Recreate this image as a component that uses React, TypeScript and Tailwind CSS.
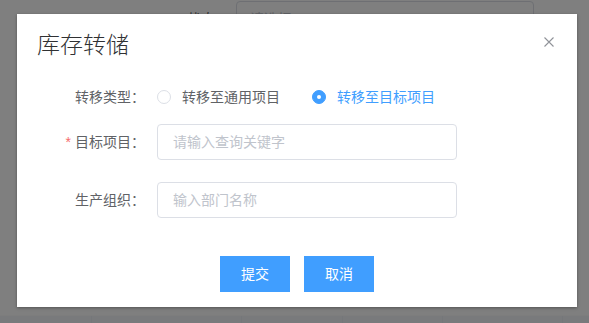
import { useState } from "react";

const font = "font-['Liberation_Sans','Noto_Sans_CJK_SC',sans-serif]";

const Radio = ({
	label,
	checked,
	onClick,
}: {
	label: string;
	checked: boolean;
	onClick: () => void;
}) => (
	<label onClick={onClick} className="flex items-center cursor-pointer">
		<span
			className={
				checked
					? "w-[14px] h-[14px] rounded-full bg-[#409eff] border border-[#409eff] flex items-center justify-center"
					: "w-[14px] h-[14px] rounded-full bg-white border border-[#dcdfe6]"
			}
		>
			{checked && <span className="w-[4px] h-[4px] rounded-full bg-white" />}
		</span>
		<span className={checked ? "pl-[11px] text-[#409eff]" : "pl-[11px] text-[#606266]"}>{label}</span>
	</label>
);

export default function App() {
	const [type, setType] = useState("target");

	return (
		<div className={`relative w-[589px] h-[323px] overflow-hidden bg-white ${font} text-[14px]`}>
			{/* page behind the dialog */}
			<div className="h-full flex flex-col justify-between">
				<div className="flex items-center pt-[1px] pl-[187px]">
					<span className="w-[49px] text-[#606266]">状态</span>
					<div className="w-[298px] h-[36px] border border-[#dcdfe6] rounded-[4px] px-[13px] flex items-center text-[#c0c4cc]">
						请选择
					</div>
				</div>
				<div className="border-t border-[#fafafa] bg-[#f3f5f8] h-[8px] flex">
					<div className="w-[92px] border-r border-[#ebeef5]" />
					<div className="w-[150px] border-r border-[#ebeef5]" />
					<div className="w-[101px] border-r border-[#ebeef5]" />
					<div className="w-[100px] border-r border-[#ebeef5]" />
					<div className="w-[120px] border-r border-[#ebeef5]" />
				</div>
			</div>

			<div className="absolute inset-0 bg-black/50" />

			<div className="absolute left-[17px] top-[14px] w-[560px] h-[293px] bg-white shadow-[0_1px_3px_rgba(0,0,0,0.35)]">
				<div className="h-[65px] pl-[20px] pt-[16px]">
					<h2 className="text-[23px] leading-[30px] font-light text-[#303133]">库存转储</h2>
				</div>
				<button className="absolute top-[23px] right-[23px] w-[10px] h-[10px]">
					<svg viewBox="0 0 10 10" width="10" height="10" className="block">
						<path d="M0.5 0.5 L9.5 9.5 M9.5 0.5 L0.5 9.5" stroke="#909399" strokeWidth="1.1" />
					</svg>
				</button>

				<div className="pl-[40px]">
					<div className="flex items-center h-[36px]">
						<span className="w-[100px] pr-[12px] text-right text-[#606266]">转移类型：</span>
						<div className="flex items-center gap-[32px]">
							<Radio label="转移至通用项目" checked={type === "common"} onClick={() => setType("common")} />
							<Radio label="转移至目标项目" checked={type === "target"} onClick={() => setType("target")} />
						</div>
					</div>

					<div className="flex items-center h-[36px] mt-[9px]">
						<span className="w-[100px] pr-[12px] text-right text-[#606266]">
							<span className="text-[#f56c6c] mr-[4px]">*</span>目标项目：
						</span>
						<input
							placeholder="请输入查询关键字"
							className="w-[300px] h-[36px] border border-[#dcdfe6] rounded-[4px] px-[15px] outline-none text-[#606266] placeholder:text-[#c0c4cc]"
						/>
					</div>

					<div className="flex items-center h-[36px] mt-[22px]">
						<span className="w-[100px] pr-[12px] text-right text-[#606266]">生产组织：</span>
						<input
							placeholder="输入部门名称"
							className="w-[300px] h-[36px] border border-[#dcdfe6] rounded-[4px] px-[15px] outline-none text-[#606266] placeholder:text-[#c0c4cc]"
						/>
					</div>
				</div>

				<div className="flex gap-[14px] pl-[203px] mt-[38px]">
					<button className="w-[70px] h-[36px] bg-[#409eff] text-white">提交</button>
					<button className="w-[70px] h-[36px] bg-[#409eff] text-white">取消</button>
				</div>
			</div>
		</div>
	);
}
